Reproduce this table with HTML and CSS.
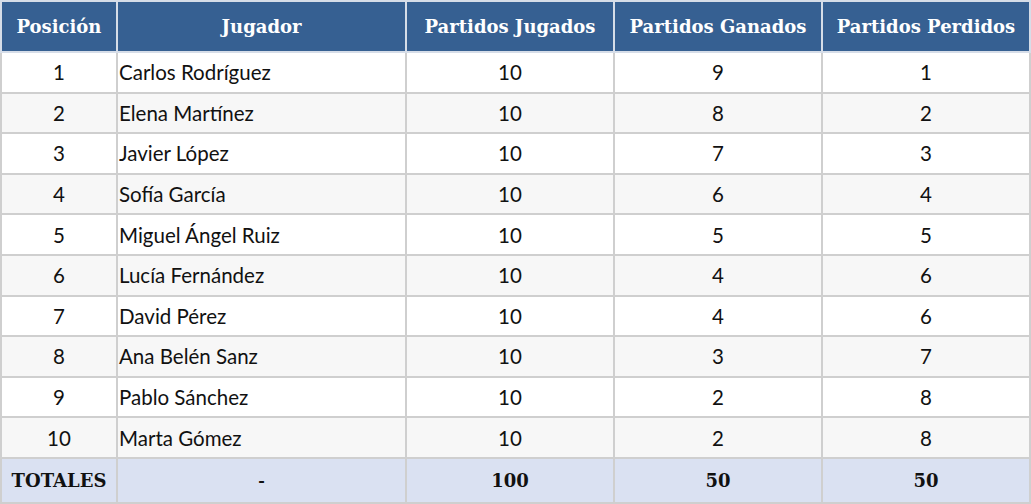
FILE: index.html
```html
<!DOCTYPE html>
<html lang="es">
<head>
<meta charset="utf-8">
<link rel="stylesheet" href="styles.css">
</head>
<body>
<table class="tabla">
  <colgroup>
    <col class="c-pos"><col class="c-jug"><col class="c-num"><col class="c-num"><col class="c-num">
  </colgroup>
  <thead>
    <tr>
      <th>Posición</th>
      <th>Jugador</th>
      <th>Partidos Jugados</th>
      <th>Partidos Ganados</th>
      <th>Partidos Perdidos</th>
    </tr>
  </thead>
  <tbody>
    <tr><td>1</td><td class="name">Carlos Rodríguez</td><td>10</td><td>9</td><td>1</td></tr>
    <tr><td>2</td><td class="name">Elena Martínez</td><td>10</td><td>8</td><td>2</td></tr>
    <tr><td>3</td><td class="name">Javier López</td><td>10</td><td>7</td><td>3</td></tr>
    <tr><td>4</td><td class="name">Sofía García</td><td>10</td><td>6</td><td>4</td></tr>
    <tr><td>5</td><td class="name">Miguel Ángel Ruiz</td><td>10</td><td>5</td><td>5</td></tr>
    <tr><td>6</td><td class="name">Lucía Fernández</td><td>10</td><td>4</td><td>6</td></tr>
    <tr><td>7</td><td class="name">David Pérez</td><td>10</td><td>4</td><td>6</td></tr>
    <tr><td>8</td><td class="name">Ana Belén Sanz</td><td>10</td><td>3</td><td>7</td></tr>
    <tr><td>9</td><td class="name">Pablo Sánchez</td><td>10</td><td>2</td><td>8</td></tr>
    <tr><td>10</td><td class="name">Marta Gómez</td><td>10</td><td>2</td><td>8</td></tr>
  </tbody>
  <tfoot>
    <tr>
      <td class="tot-label">TOTALES</td>
      <td class="dash">-</td>
      <td>100</td>
      <td>50</td>
      <td>50</td>
    </tr>
  </tfoot>
</table>
</body>
</html>
```
FILE: styles.css
```css
html, body {
  margin: 0;
  padding: 0;
  background: #ffffff;
}
.tabla {
  width: 1031px;
  border-collapse: collapse;
  table-layout: fixed;
  font-family: Lato, "Noto Sans", sans-serif;
  font-size: 20.5px;
  color: #111;
}
.c-pos { width: 116px; }
.c-jug { width: 289px; }
.c-num { width: 208px; }
.tabla th {
  background: #366092;
  color: #ffffff;
  font-family: "DejaVu Serif", "Liberation Serif", serif;
  font-weight: bold;
  font-size: 18px;
  height: 49px;
  padding: 0 4px;
  border: 2px solid #d6dde8;
  text-align: center;
  white-space: nowrap;
}
.tabla td {
  height: 38.6px;
  padding: 0 1px;
  border: 2px solid #cfcfcf;
  text-align: center;
}
.tabla tbody tr:nth-child(even) td {
  background: #f7f7f7;
}
.tabla td.name {
  text-align: left;
}
.tabla tfoot td {
  background: #dae1f2;
  font-family: "DejaVu Serif", "Liberation Serif", serif;
  font-weight: bold;
  font-size: 18px;
  height: 43px;
}
.tabla tfoot td.dash {
  font-family: Lato, "Noto Sans", sans-serif;
  font-size: 19px;
}
```
